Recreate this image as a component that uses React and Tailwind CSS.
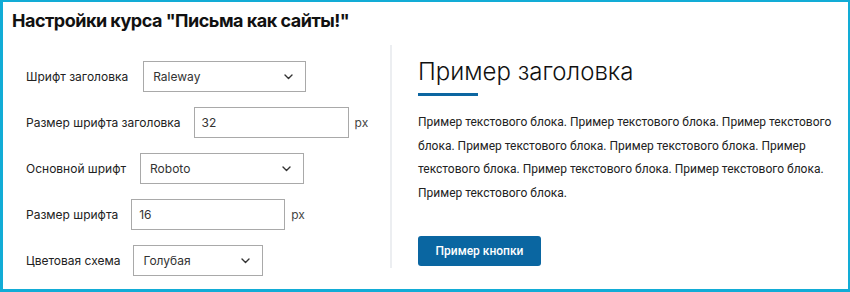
import React from "react";

const Chevron = () => (
  <svg width="9" height="6" viewBox="0 0 9 6" fill="none" className="shrink-0">
    <path d="M1 1l3.5 3.5L8 1" stroke="#333" strokeWidth="1.4" strokeLinecap="round" strokeLinejoin="round" />
  </svg>
);

const Select = ({ value, w }) => (
  <div className={`${w} h-[31px] border border-[#a9a9a9] flex items-center justify-between pl-[9px] pr-[12px] text-[12px] text-[#333] font-['Inter',sans-serif]`}>
    <span>{value}</span>
    <Chevron />
  </div>
);

const Input = ({ value, w }) => (
  <div className={`${w} h-[31px] border border-[#a9a9a9] flex items-center pl-[7px] text-[12px] text-[#333] font-['Inter',sans-serif]`}>
    {value}
  </div>
);

export default function App() {
  return (
    <div className="w-[850px] h-[292px] box-border bg-white border-[#12acd6] border-t-[2px] border-r-[2px] border-l-[3px] border-b-[3px] font-['Inter',sans-serif] text-[#1a1a1a]">
      <h1 className="pl-[9px] pt-[6px] text-[18px] leading-[26px] font-bold text-[#111] tracking-[-0.5px]">
        Настройки курса "Письма как сайты!"
      </h1>
      <div className="flex mt-[11px]">
        <div className="w-[389px] h-[223px] border-r-2 border-[#eceef1] pl-[23px] pt-[16px] flex flex-col gap-[15px] text-[12px] text-[#222]">
          <div className="flex items-center">
            <span className="mr-[15px]">Шрифт заголовка</span>
            <Select value="Raleway" w="w-[163px]" />
          </div>
          <div className="flex items-center">
            <span className="mr-[13px]">Размер шрифта заголовка</span>
            <Input value="32" w="w-[155px]" />
            <span className="ml-[6px] text-[#444]">px</span>
          </div>
          <div className="flex items-center">
            <span className="mr-[14px]">Основной шрифт</span>
            <Select value="Roboto" w="w-[164px]" />
          </div>
          <div className="flex items-center">
            <span className="mr-[13px]">Размер шрифта</span>
            <Input value="16" w="w-[154px]" />
            <span className="ml-[6px] text-[#444]">px</span>
          </div>
          <div className="flex items-center">
            <span className="mr-[13px]">Цветовая схема</span>
            <Select value="Голубая" w="w-[130px]" />
          </div>
        </div>
        <div className="flex-1 pl-[26px] pr-[14px] pt-[12px]">
          <h2 className="text-[24px] leading-[30px] font-light text-[#111]">Пример заголовка</h2>
          <div className="w-[60px] h-[3px] bg-[#0c66a1] mt-[6px]" />
          <p className="mt-[15px] text-[12px] leading-[23.5px] text-[#222] font-['Roboto',sans-serif]">
            Пример текстового блока. Пример текстового блока. Пример текстового блока. Пример текстового блока. Пример текстового блока. Пример текстового блока. Пример текстового блока. Пример текстового блока. Пример текстового блока.
          </p>
          <button className="mt-[31px] w-[123px] h-[30px] rounded-[3px] bg-[#0a66a1] text-white text-[12px] font-medium font-['Roboto',sans-serif]">
            Пример кнопки
          </button>
        </div>
      </div>
    </div>
  );
}
